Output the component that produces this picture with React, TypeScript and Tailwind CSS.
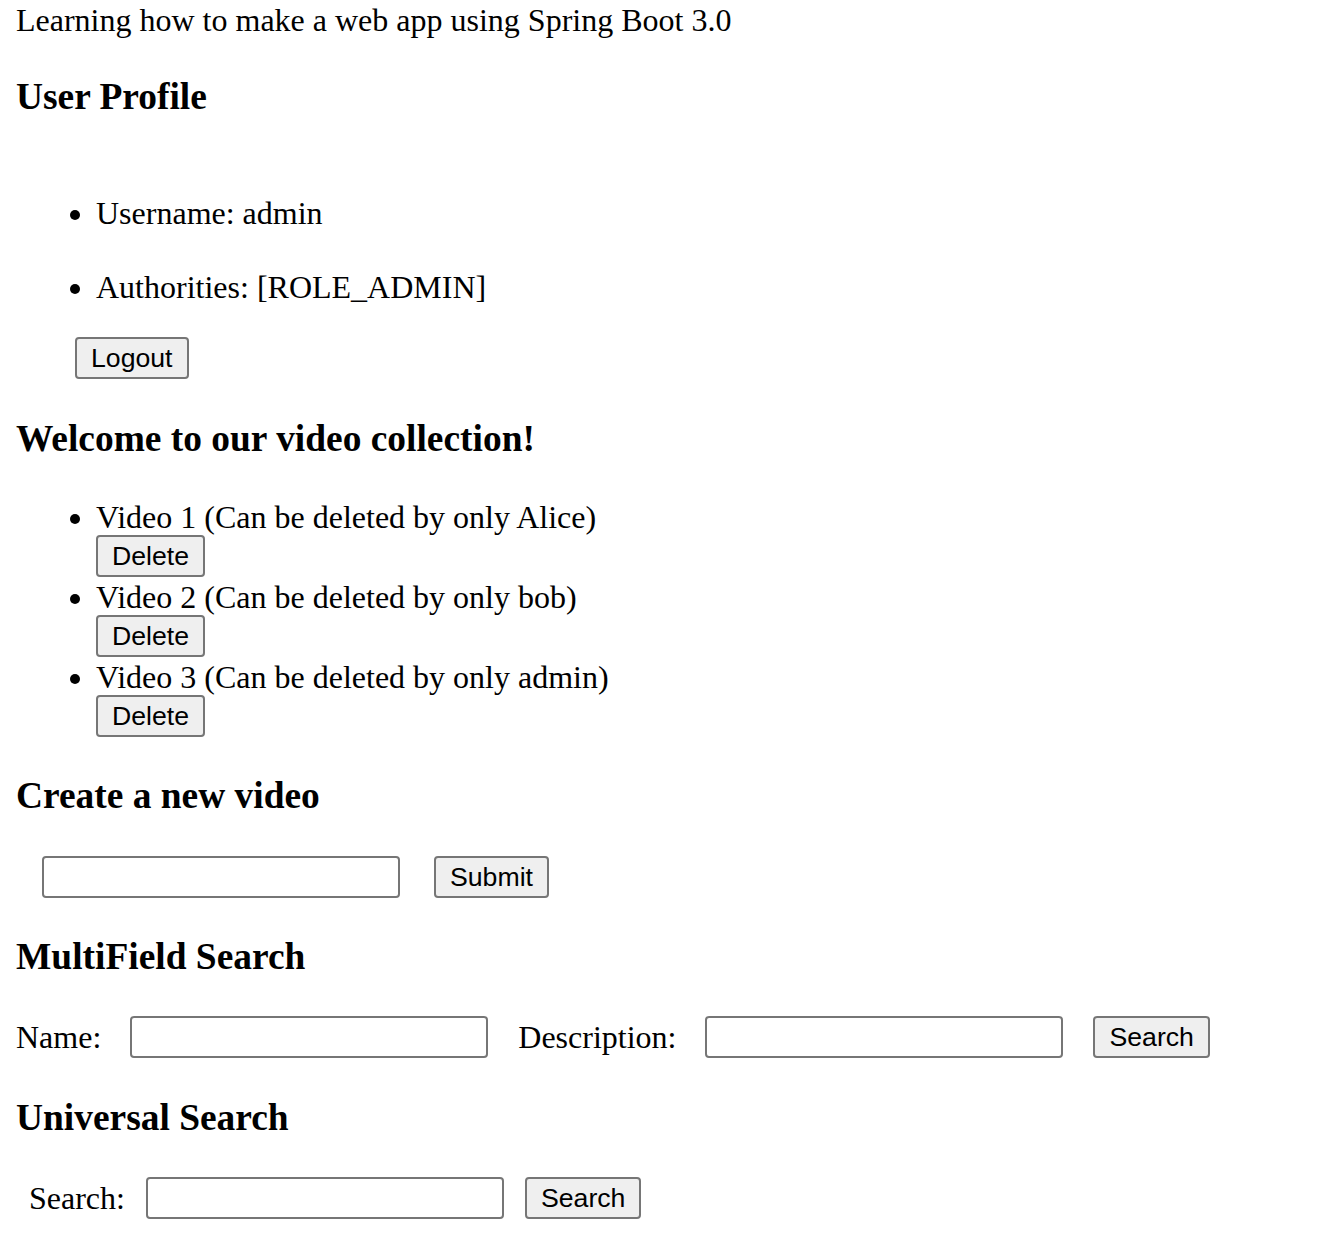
import React from 'react'

const btn =
    "inline-flex h-[42px] items-center justify-center rounded-[4px] border-2 border-[#767676] bg-[#efefef] px-[14px] font-['Liberation_Sans',Arial,sans-serif] text-[26.67px] leading-[normal] text-black"

const field = "h-[42px] w-[358px] rounded-[4px] border-2 border-[#767676] bg-white"

const Heading = ({ children, className = '' }: { children: React.ReactNode; className?: string }) => (
    <h3 className={`h-[43px] text-[37.44px] font-bold leading-[normal] ${className}`}>{children}</h3>
)

const videos = [
    'Video 1 (Can be deleted by only Alice)',
    'Video 2 (Can be deleted by only bob)',
    'Video 3 (Can be deleted by only admin)',
]

export default function App() {
    return (
        <div className="flex min-h-[1234px] flex-col bg-white px-[16px] pt-[2px] font-['Liberation_Serif','Times_New_Roman',serif] text-[32px] leading-[normal] text-black">
            <p className="h-[37px]">Learning how to make a web app using Spring Boot 3.0</p>

            <Heading className="mt-[36px]">User Profile</Heading>

            <ul className="mt-[77px] list-disc pl-[80px]">
                <li className="h-[37px]">Username: admin</li>
                <li className="mt-[37px] h-[37px]">Authorities: [ROLE_ADMIN]</li>
            </ul>

            <div className="mt-[31px] pl-[59px]">
                <button className={btn}>Logout</button>
            </div>

            <Heading className="mt-[38px]">Welcome to our video collection!</Heading>

            <ul className="mt-[39px] list-disc pl-[80px]">
                {videos.map((v) => (
                    <li key={v} className="pb-[2px]">
                        <div className="h-[36px]">{v}</div>
                        <button className={btn}>Delete</button>
                    </li>
                ))}
            </ul>

            <Heading className="mt-[35px]">Create a new video</Heading>

            <div className="mt-[39px] flex items-center pl-[26px]">
                <input className={field} type="text" />
                <button className={`${btn} ml-[34px]`}>Submit</button>
            </div>

            <Heading className="mt-[37px]">MultiField Search</Heading>

            <div className="mt-[38px] flex items-center">
                <label>Name:</label>
                <input className={`${field} ml-[29px]`} type="text" />
                <label className="ml-[30px]">Description:</label>
                <input className={`${field} ml-[29px]`} type="text" />
                <button className={`${btn} ml-[30px]`}>Search</button>
            </div>

            <Heading className="mt-[38px]">Universal Search</Heading>

            <div className="mt-[38px] flex items-center pl-[13px]">
                <label>Search:</label>
                <input className={`${field} ml-[21px]`} type="text" />
                <button className={`${btn} ml-[21px]`}>Search</button>
            </div>
        </div>
    )
}
